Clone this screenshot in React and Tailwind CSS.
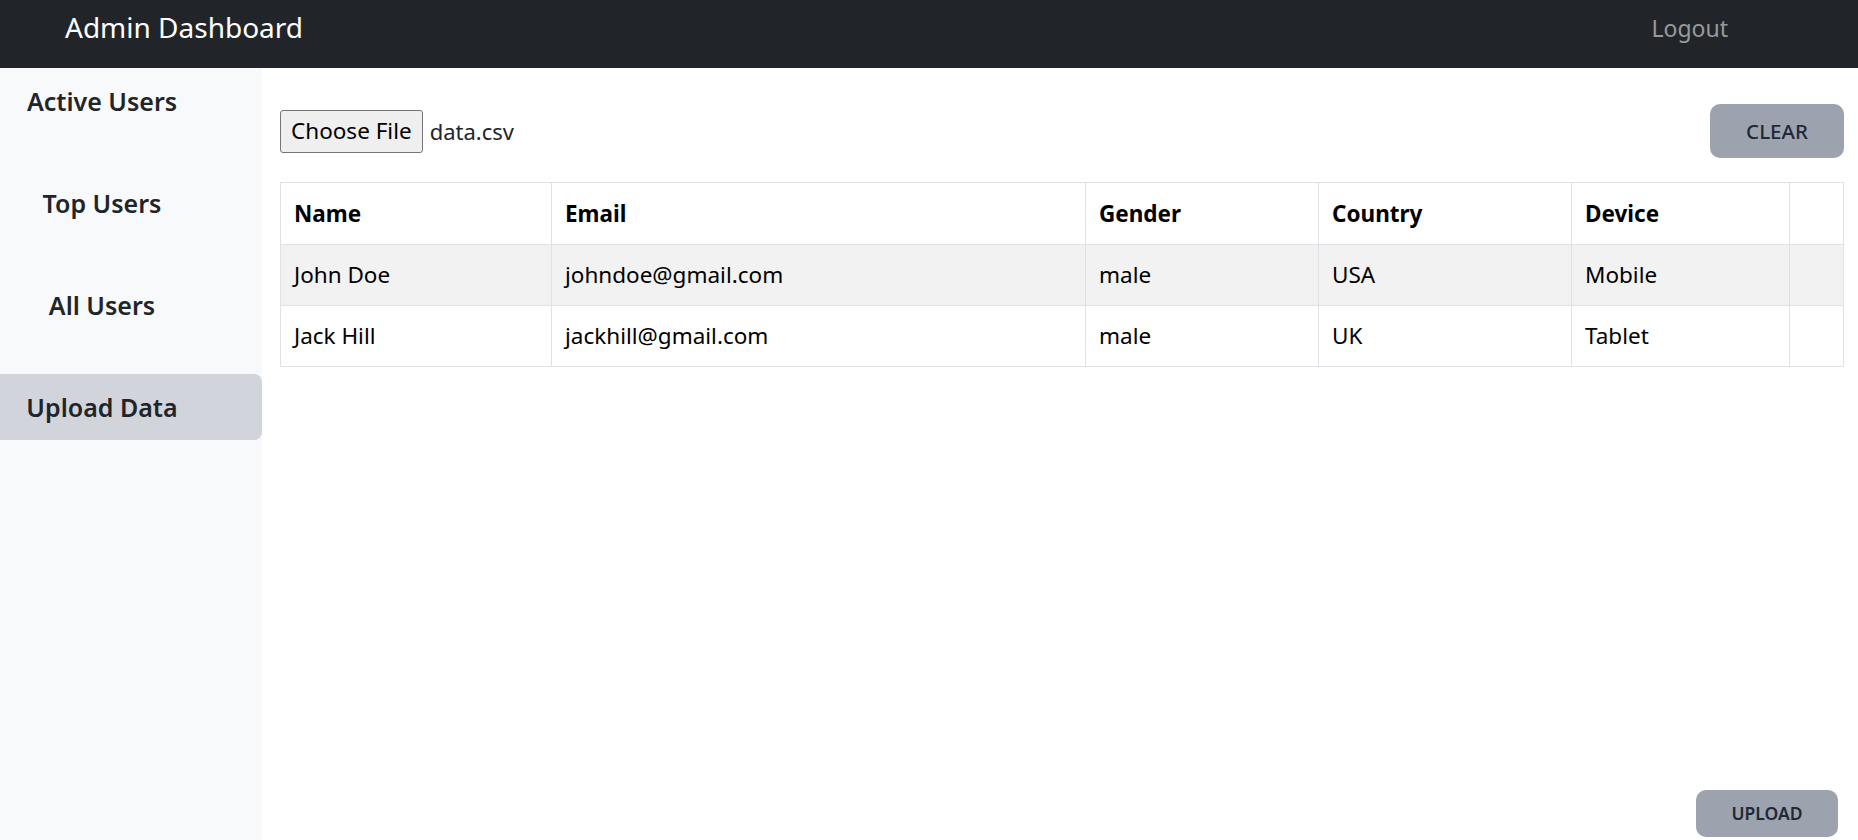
import React from 'react';

const users = [
  { name: 'John Doe', email: 'johndoe@gmail.com', gender: 'male', country: 'USA', device: 'Mobile' },
  { name: 'Jack Hill', email: 'jackhill@gmail.com', gender: 'male', country: 'UK', device: 'Tablet' },
];

const menu = ['Active Users', 'Top Users', 'All Users', 'Upload Data'];

export default function App() {
  const active = 'Upload Data';

  return (
    <div className="h-screen w-full flex flex-col overflow-hidden font-['Noto_Sans','Open_Sans',sans-serif] text-[#212529]">
      <nav className="h-[68px] shrink-0 bg-[#212529] flex items-center justify-between pl-[65px] pr-[130px] pb-[14px]">
        <h1 className="text-white text-[28px] leading-none">Admin Dashboard</h1>
        <a className="text-[#ffffff8c] text-[23px] leading-none mt-[2px] cursor-pointer">Logout</a>
      </nav>

      <div className="flex flex-1 min-h-0">
        <aside className="w-[262px] shrink-0 bg-[#f8f9fa] flex flex-col gap-[36px]">
          {menu.map((item) => (
            <div
              key={item}
              className={
                'h-[66px] flex items-center rounded-r-lg ' +
                (item === active ? 'bg-[#d1d5db]' : '')
              }
            >
              <span className="w-[204px] text-center text-[25px] font-semibold mt-[2px]">{item}</span>
            </div>
          ))}
        </aside>

        <main className="flex-1 flex flex-col pl-[18px] pr-[14px]">
          <div className="mt-[36px] h-[54px] flex items-center justify-between">
            <div className="flex items-center gap-[7px]">
              <button className="h-[43px] px-[10px] bg-[#efefef] border border-[#767676] rounded-[3px] text-[22.5px] text-black">
                Choose File
              </button>
              <span className="text-[22px]">data.csv</span>
            </div>
            <button className="h-[54px] w-[134px] bg-[#9ca3af] rounded-[10px] text-[20.5px] font-medium text-[#1f2937]">
              CLEAR
            </button>
          </div>

          <table className="mt-[24px] w-full border-collapse border border-[#dee2e6] text-[22.5px] text-black">
            <thead>
              <tr className="h-[62px] text-left">
                <th className="w-[271px] border border-[#dee2e6] px-[13px] font-bold">Name</th>
                <th className="w-[534px] border border-[#dee2e6] px-[13px] font-bold">Email</th>
                <th className="w-[233px] border border-[#dee2e6] px-[13px] font-bold">Gender</th>
                <th className="w-[253px] border border-[#dee2e6] px-[13px] font-bold">Country</th>
                <th className="w-[218px] border border-[#dee2e6] px-[13px] font-bold">Device</th>
                <th className="border border-[#dee2e6]"></th>
              </tr>
            </thead>
            <tbody>
              {users.map((u, i) => (
                <tr key={u.email} className={'h-[61px] ' + (i % 2 === 0 ? 'bg-[#f2f2f2]' : 'bg-white')}>
                  <td className="border border-[#dee2e6] px-[13px]">{u.name}</td>
                  <td className="border border-[#dee2e6] px-[13px]">{u.email}</td>
                  <td className="border border-[#dee2e6] px-[13px]">{u.gender}</td>
                  <td className="border border-[#dee2e6] px-[13px]">{u.country}</td>
                  <td className="border border-[#dee2e6] px-[13px]">{u.device}</td>
                  <td className="border border-[#dee2e6]"></td>
                </tr>
              ))}
            </tbody>
          </table>

          <button className="mt-auto mb-[3px] mr-[6px] self-end h-[47px] w-[142px] bg-[#9ca3af] rounded-[10px] text-[17.5px] font-semibold text-[#1f2937]">
            UPLOAD
          </button>
        </main>
      </div>
    </div>
  );
}
